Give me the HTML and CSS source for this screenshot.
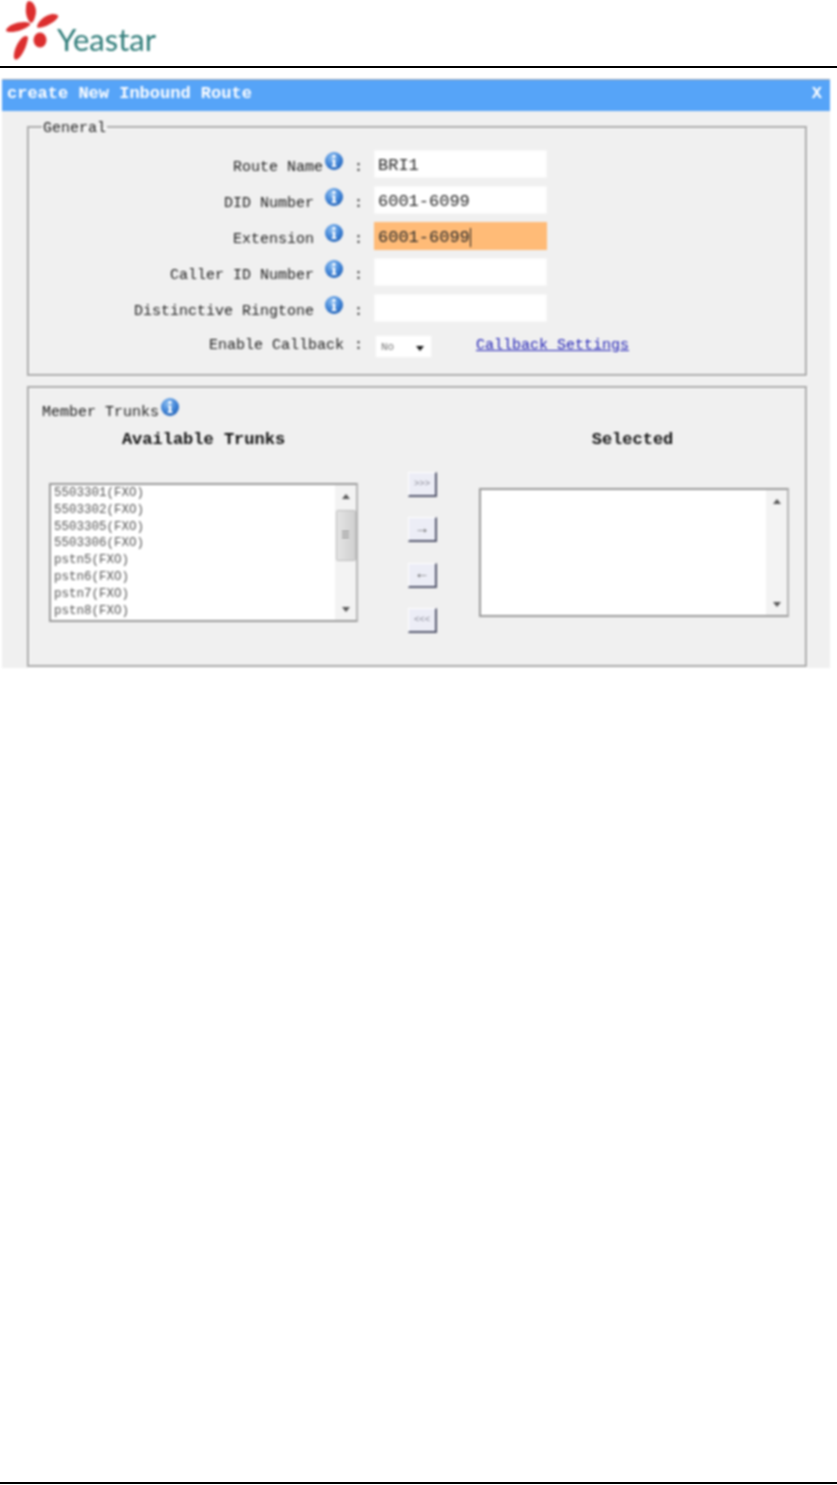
FILE: index.html
```html
<!DOCTYPE html>
<html lang="en">
<head>
<meta charset="utf-8">
<title>Create New Inbound Route</title>
<link rel="stylesheet" href="styles.css">
</head>
<body>
<svg class="defs" width="0" height="0" aria-hidden="true">
  <defs>
    <radialGradient id="infoFill" cx="40%" cy="30%" r="75%">
      <stop offset="0" stop-color="#8fc0f2"/>
      <stop offset="0.6" stop-color="#3f83d6"/>
      <stop offset="1" stop-color="#1f5fb4"/>
    </radialGradient>
    <symbol id="info" viewBox="0 0 20 20">
      <circle cx="10" cy="10" r="9" fill="url(#infoFill)"/>
      <circle cx="10" cy="5.4" r="1.7" fill="#fff"/>
      <path d="M8 8.4h3.3v6.2h1.2v1.4H7.6v-1.4h1.2V9.8H8z" fill="#fff"/>
    </symbol>
  </defs>
</svg>

<header class="top">
  <div class="logo">
    <svg class="logo-mark" viewBox="0 0 60 60" width="60" height="60" aria-hidden="true">
      <path d="M29 1C34 1 38 10 35 17C34 21 32 23 31 23C28 21 25 14 26 8C26 4 27 1 29 1Z" fill="#dc2e2e"/>
      <path d="M6 30C8 25 17 22 24 22C28 22 31 23 30 25C27 28 20 31 13 32C9 32 6 32 6 30Z" fill="#dc2e2e"/>
      <path d="M37 27C37 22 45 15 52 14C56 14 59 15 58 17C56 21 49 25 43 27C40 28 37 28 37 27Z" fill="#dc2e2e"/>
      <path d="M14 58C13 52 17 42 23 37C26 35 28 36 28 38C27 44 24 53 19 58C17 60 15 60 14 58Z" fill="#dc2e2e"/>
      <ellipse cx="40" cy="40" rx="6.5" ry="7.5" fill="#dc2e2e"/>
    </svg>
    <span class="logo-text">Yeastar</span>
  </div>
</header>

<main class="dialog">
  <div class="title-bar">
    <span>create New Inbound Route</span>
    <span class="close">X</span>
  </div>
  <div class="dialog-body">
    <fieldset class="group general">
      <legend>General</legend>
      <div class="form-row">
        <div class="label"><span class="label-text">Route Name</span><svg class="info"><use href="#info"/></svg></div>
        <span class="colon">:</span>
        <div class="field">BRI1</div>
      </div>
      <div class="form-row">
        <div class="label"><span class="label-text">DID Number </span><svg class="info"><use href="#info"/></svg></div>
        <span class="colon">:</span>
        <div class="field">6001-6099</div>
      </div>
      <div class="form-row">
        <div class="label"><span class="label-text">Extension </span><svg class="info"><use href="#info"/></svg></div>
        <span class="colon">:</span>
        <div class="field focused">6001-6099<i class="caret"></i></div>
      </div>
      <div class="form-row">
        <div class="label"><span class="label-text">Caller ID Number </span><svg class="info"><use href="#info"/></svg></div>
        <span class="colon">:</span>
        <div class="field"></div>
      </div>
      <div class="form-row">
        <div class="label"><span class="label-text">Distinctive Ringtone </span><svg class="info"><use href="#info"/></svg></div>
        <span class="colon">:</span>
        <div class="field"></div>
      </div>
      <div class="form-row callback">
        <div class="label"><span class="label-text">Enable Callback</span></div>
        <span class="colon">:</span>
        <div class="callback-controls">
          <div class="select"><span>No</span><i class="select-arrow"></i></div>
          <a class="link" href="#">Callback Settings</a>
        </div>
      </div>
    </fieldset>

    <fieldset class="group members">
      <div class="members-label">Member Trunks<svg class="info"><use href="#info"/></svg></div>
      <div class="trunks">
        <h2 class="trunk-head">Available Trunks</h2>
        <span></span>
        <h2 class="trunk-head selected-head">Selected</h2>

        <div class="listbox available">
          <ul class="items">
            <li>5503301(FXO)</li>
            <li>5503302(FXO)</li>
            <li>5503305(FXO)</li>
            <li>5503306(FXO)</li>
            <li>pstn5(FXO)</li>
            <li>pstn6(FXO)</li>
            <li>pstn7(FXO)</li>
            <li>pstn8(FXO)</li>
          </ul>
          <div class="scrollbar">
            <i class="tri up"></i>
            <div class="thumb"><b></b></div>
            <i class="tri down"></i>
          </div>
        </div>

        <div class="moves">
          <button class="move" type="button">&gt;&gt;&gt;</button>
          <button class="move arrow" type="button">&rarr;</button>
          <button class="move arrow" type="button">&larr;</button>
          <button class="move" type="button">&lt;&lt;&lt;</button>
        </div>

        <div class="listbox selected">
          <div class="items"></div>
          <div class="scrollbar">
            <i class="tri up"></i>
            <i class="tri down"></i>
          </div>
        </div>
      </div>
    </fieldset>
  </div>
</main>

<footer class="bottom"></footer>
</body>
</html>
```

FILE: styles.css
```css
* { box-sizing: border-box; }

html, body { margin: 0; padding: 0; background: #fff; }

body {
  width: 837px;
  height: 1485px;
  display: flex;
  flex-direction: column;
  overflow: hidden;
  font-family: "Liberation Mono", monospace;
  font-size: 15px;
  color: #1c1c1c;
}

.defs { display: block; height: 0; }

.top {
  height: 68px;
  flex: none;
  border-bottom: 2px solid #000;
}

.logo {
  display: flex;
  align-items: flex-start;
  height: 66px;
  filter: blur(0.8px);
}

.logo-mark { flex: none; }

.logo-text {
  margin: 19px 0 0 -3px;
  font-family: "Lato", sans-serif;
  font-size: 31px;
  line-height: 40px;
  color: #2f7c79;
}

.dialog {
  flex: none;
  width: 828px;
  height: 589px;
  margin: 11px 0 0 2px;
  overflow: hidden;
  background: #f0f0f0;
  filter: blur(0.8px);
}

.title-bar {
  height: 32px;
  padding: 0 8px 4px 5px;
  display: flex;
  justify-content: space-between;
  align-items: center;
  background: #56a4f8;
  border-top: 1px solid #9aa6b4;
  font-size: 17px;
  font-weight: 700;
  color: #fff;
}

.dialog-body { padding: 5px 23px 0 25px; }

.group {
  margin: 0;
  padding: 0;
  min-width: 0;
  border: 2px solid #a9a9a9;
  box-shadow: inset 1px 1px 0 #fff, 1px 1px 0 #fff;
}

.general { height: 260px; padding: 13px 0 0; }

.general legend {
  margin-left: 13px;
  padding: 4px 1px 0;
  font-size: 15px;
  line-height: 17px;
}

.form-row {
  display: grid;
  grid-template-columns: 315px 30px 1fr;
  align-items: center;
  height: 28px;
  margin-bottom: 8px;
}

.label {
  display: flex;
  justify-content: flex-end;
  align-items: center;
}

.label-text {
  white-space: pre;
  padding-top: 6px;
}

.info {
  display: block;
  flex: none;
  width: 20px;
  height: 20px;
  margin-bottom: 6px;
}

.label .info { margin-left: 1px; }

.colon {
  padding-left: 10px;
  padding-top: 6px;
}

.field {
  width: 173px;
  height: 28px;
  padding: 2px 3px 0;
  display: flex;
  align-items: center;
  background: #fff;
  border: 1px solid #f8f8f8;
  font-size: 17px;
  color: #2a2a2a;
}

.focused {
  background: #ffbb77;
  border-color: #ffbb77;
}

.caret {
  display: block;
  width: 1px;
  height: 19px;
  background: #222;
}

.callback {
  height: 23px;
  margin: 13px 0 0;
}

.callback .label-text,
.callback .colon { padding-top: 0; padding-bottom: 2px; }

.callback-controls {
  display: flex;
  align-items: center;
}

.select {
  width: 57px;
  height: 23px;
  margin-left: 1px;
  padding: 0 4px 0 5px;
  display: flex;
  justify-content: space-between;
  align-items: center;
  background: #fff;
  border: 1px solid #f2f2f2;
  font-size: 11px;
  color: #777;
}

.select-arrow {
  margin-top: 3px;
  margin-right: 3px;
  border: 4px solid transparent;
  border-top: 5px solid #111;
  border-bottom: 0;
}

.link {
  margin-left: 44px;
  padding-bottom: 2px;
  color: #1c1cb4;
  text-decoration: underline;
}

.members {
  height: 281px;
  margin-top: 10px;
  padding: 9px 16px 0 20px;
}

.members-label {
  display: flex;
  align-items: flex-start;
  margin-left: -7px;
  height: 23px;
  line-height: 32px;
}

.members-label .info { margin: 0 0 0 1px; }

.trunks {
  display: grid;
  grid-template-columns: 309px 121px 310px;
  grid-template-rows: 52px auto;
}

.trunk-head {
  margin: 0;
  padding-top: 10px;
  font-size: 17px;
  line-height: 20px;
  font-weight: 700;
  text-align: center;
  color: #111;
}

.selected-head { padding-right: 3px; }

.listbox {
  display: flex;
  align-items: stretch;
  background: #fff;
  border: 2px solid #9a9a9a;
  border-right-color: #b5b5b5;
}

.available { height: 139px; margin-top: 11px; }

.selected { height: 129px; margin-top: 16px; }

.items {
  flex: 1;
  margin: 0;
  padding: 0 0 0 3px;
  list-style: none;
  font-size: 12.5px;
  line-height: 16.8px;
  color: #555;
}

.scrollbar {
  width: 21px;
  flex: none;
  display: flex;
  flex-direction: column;
  align-items: center;
  padding: 9px 0 8px;
  background: #f3f3f3;
}

.tri {
  display: block;
  border-left: 4px solid transparent;
  border-right: 4px solid transparent;
}

.tri.up { border-bottom: 5px solid #555; }

.tri.down {
  margin-top: auto;
  border-top: 5px solid #555;
}

.thumb {
  width: 20px;
  height: 51px;
  margin-top: 11px;
  display: flex;
  justify-content: center;
  align-items: center;
  background: linear-gradient(90deg, #e4e4e4, #d0d0d0);
  border: 1px solid #bdbdbd;
  border-radius: 2px;
}

.thumb b {
  display: block;
  width: 7px;
  height: 9px;
  background: repeating-linear-gradient(#777 0 1px, #ddd 1px 3px);
}

.moves {
  display: flex;
  flex-direction: column;
  align-items: flex-start;
  gap: 20.4px;
  padding-left: 50px;
}

.move {
  width: 29px;
  height: 25px;
  padding: 0;
  background: #ecedf6;
  border: 1px solid #fff;
  border-right: 2px solid #55586e;
  border-bottom: 2px solid #55586e;
  font-family: "Liberation Mono", monospace;
  font-size: 9px;
  color: #8a8a96;
}

.move.arrow {
  font-size: 15px;
  color: #555;
}

.bottom {
  flex: none;
  height: 2px;
  margin-top: auto;
  margin-bottom: 1px;
  background: #000;
}
```
